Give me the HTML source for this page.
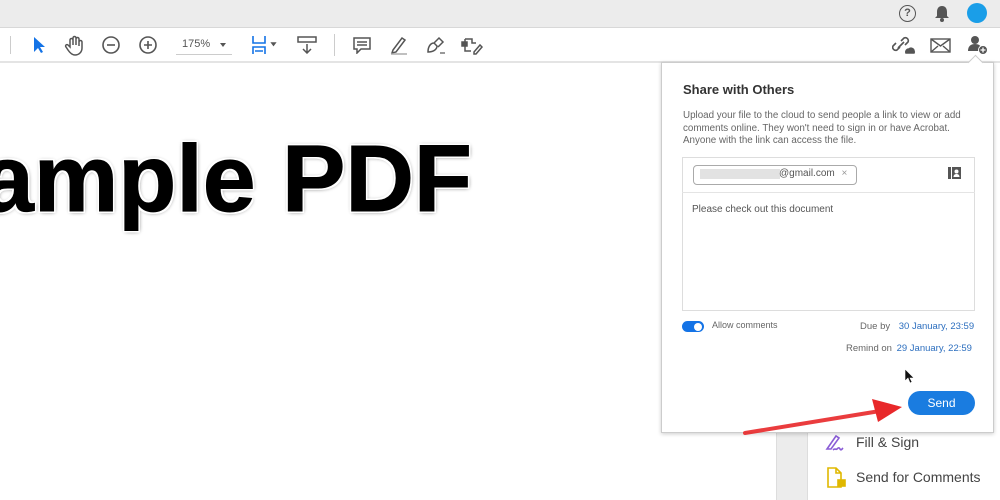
<!DOCTYPE html><html><head><style>
body{margin:0;width:1000px;height:500px;overflow:hidden;background:#fff;font-family:"Liberation Sans",sans-serif;position:relative}
.a{position:absolute}
</style></head><body>
<div class="a" style="left:0;top:0;width:1000px;height:27px;background:#ececec;border-bottom:1px solid #d8d8d8"></div>
<div class="a" style="left:0;top:28px;width:1000px;height:33px;background:#fff;border-bottom:2px solid #e4e4e4"></div>
<div class="a" style="left:899px;top:5px;width:15px;height:15px;border:1.5px solid #555;border-radius:50%;font-size:11px;font-weight:bold;color:#555;text-align:center;line-height:15px">?</div>
<svg class="a" style="left:934px;top:5px" width="16" height="17"><path d="M8 1c-3 0-5 2-5 6v4l-2 2h14l-2-2V7c0-4-2-6-5-6z" fill="#555"/><circle cx="8" cy="15" r="2" fill="#555"/></svg>
<div class="a" style="left:967px;top:3px;width:20px;height:20px;border-radius:50%;background:#1a9ee8"></div>
<div class="a" style="left:10px;top:36px;width:1px;height:18px;background:#ccc"></div>
<svg class="a" style="left:32px;top:36px" width="14" height="18"><path d="M2 1v15l4-4 3 5 2-1-3-5h5z" fill="#1473e6"/></svg>
<svg class="a" style="left:64px;top:34px" width="22" height="22" fill="none" stroke="#555" stroke-width="1.5"><path d="M6 13V6a1.5 1.5 0 013 0v5V4a1.5 1.5 0 013 0v7V5a1.5 1.5 0 013 0v7V8a1.5 1.5 0 013 0v6c0 4-3 7-7 7-3 0-5-2-7-5l-2-3a1.3 1.3 0 012-2z"/></svg>
<svg class="a" style="left:101px;top:35px" width="20" height="20" fill="none" stroke="#555" stroke-width="1.6"><circle cx="10" cy="10" r="8"/><path d="M6 10h8"/></svg>
<svg class="a" style="left:138px;top:35px" width="20" height="20" fill="none" stroke="#555" stroke-width="1.6"><circle cx="10" cy="10" r="8"/><path d="M6 10h8M10 6v8"/></svg>
<div class="a" style="left:182px;top:38px;font-size:11px;color:#555">175%</div>
<div class="a" style="left:220px;top:43px;border:3px solid transparent;border-top:4px solid #555"></div>
<div class="a" style="left:176px;top:54px;width:56px;height:1px;background:#ccc"></div>
<svg class="a" style="left:250px;top:34px" width="30" height="22" fill="none" stroke="#1473e6" stroke-width="1.6"><path d="M3 2v7h12V2M3 20v-7h12v7M5 17h8"/><path d="M22 9l3 0-1.5 2z" fill="#555" stroke="#555"/></svg>
<svg class="a" style="left:297px;top:36px" width="20" height="18" fill="none" stroke="#555" stroke-width="1.5"><rect x="1" y="1" width="18" height="5"/><path d="M10 8v9M6 13l4 4 4-4"/></svg>
<div class="a" style="left:334px;top:34px;width:1px;height:22px;background:#ccc"></div>
<svg class="a" style="left:352px;top:36px" width="20" height="18" fill="none" stroke="#555" stroke-width="1.5"><path d="M2 2h16v11H9l-4 4v-4H2z M5 6h10M5 9h10"/></svg>
<svg class="a" style="left:389px;top:35px" width="20" height="20" fill="none" stroke="#555" stroke-width="1.5"><path d="M4 15l9-12 3 2-9 12-4 1z"/><path d="M2 19h16" stroke="#aaa"/></svg>
<svg class="a" style="left:425px;top:35px" width="22" height="20" fill="none" stroke="#555" stroke-width="1.5"><path d="M3 17c0-6 3-9 6-9l3 3c0 3-3 6-9 6zM9 8l5-5 4 4-5 5"/><path d="M15 18h5" stroke="#777"/></svg>
<svg class="a" style="left:461px;top:35px" width="22" height="20" fill="none" stroke="#555" stroke-width="1.5"><path d="M4 4h7v4h4M4 4v12h6M13 17l6-7 2 2-6 7h-2z"/><rect x="1" y="7" width="5" height="4" fill="#555"/></svg>
<svg class="a" style="left:892px;top:35px" width="24" height="20" fill="none" stroke="#555" stroke-width="1.6"><path d="M9 6l3-3a3 3 0 014 4l-3 3M8 12l-3 3a3 3 0 01-4-4l3-3M6 13l6-6"/><path d="M14 18a3 3 0 013-4 3 3 0 015 2 2 2 0 010 2z" fill="#555"/></svg>
<svg class="a" style="left:930px;top:38px" width="21" height="15" fill="none" stroke="#555" stroke-width="1.4"><rect x="1" y="1" width="19" height="13"/><path d="M1 1l9.5 7 9.5-7M1 14l7-6M20 14l-7-6"/></svg>
<svg class="a" style="left:966px;top:34px" width="24" height="22"><circle cx="9" cy="6" r="4" fill="#555"/><path d="M2 17c0-5 3-7 7-7s7 2 7 7z" fill="#555"/><circle cx="17" cy="16" r="4.5" fill="#555" stroke="#fff"/><path d="M17 13.5v5M14.5 16h5" stroke="#fff" stroke-width="1.3"/></svg>
<div class="a" style="left:-19px;top:124px;font-size:95px;font-weight:bold;color:#000;white-space:pre;line-height:110px;-webkit-text-stroke:1px #000;text-shadow:2px 0 0 #fff,-2px 0 0 #fff,0 2px 0 #fff,0 -2px 0 #fff,2px 2px 0 #fff,-2px -2px 0 #fff,2px -2px 0 #fff,-2px 2px 0 #fff,0 0 4px #999,1px 1px 4px #888">ample PDF</div>
<div class="a" style="left:776px;top:430px;width:30px;height:70px;background:#ececec;border-left:1px solid #ddd;border-right:1px solid #ddd"></div>
<svg class="a" style="left:825px;top:433px" width="20" height="20" fill="none" stroke="#8a5cd6" stroke-width="1.6"><path d="M2 16l9-13 3 2-8 11zM8 17c2-2 3 0 4-1s2-2 3 0 2 0 3-1"/></svg>
<div class="a" style="left:856px;top:434px;font-size:14px;color:#444">Fill &amp; Sign</div>
<svg class="a" style="left:826px;top:467px" width="22" height="22" fill="none" stroke="#e0b800" stroke-width="1.6"><path d="M2 1h8l5 5v14H2zM10 1v5h5"/><rect x="12" y="13" width="7" height="6" fill="#e0b800"/></svg>
<div class="a" style="left:856px;top:469px;font-size:14px;color:#444">Send for Comments</div>
<div class="a" style="left:661px;top:62px;width:331px;height:369px;background:#fff;border:1px solid #ccc;box-shadow:0 1px 4px rgba(0,0,0,.2)"></div>
<div class="a" style="left:970px;top:57px;width:10px;height:10px;background:#fff;border-left:1px solid #ccc;border-top:1px solid #ccc;transform:rotate(45deg)"></div>
<div class="a" style="left:683px;top:82px;font-size:13px;font-weight:bold;color:#333">Share with Others</div>
<div class="a" style="left:683px;top:110px;width:295px;font-size:9.8px;line-height:12.5px;color:#666">Upload your file to the cloud to send people a link to view or add comments online. They won't need to sign in or have Acrobat. Anyone with the link can access the file.</div>
<div class="a" style="left:682px;top:157px;width:291px;height:152px;border:1px solid #ddd"></div>
<div class="a" style="left:682px;top:192px;width:293px;height:1px;background:#e4e4e4"></div>
<div class="a" style="left:693px;top:165px;width:162px;height:18px;border:1px solid #aaa;border-radius:4px"></div>
<div class="a" style="left:700px;top:169px;width:80px;height:10px;background:#e2e2e2"></div>
<div class="a" style="left:779px;top:168px;font-size:10px;color:#555">@gmail.com <span style="color:#999;margin-left:4px">×</span></div>
<svg class="a" style="left:948px;top:166px" width="14" height="14"><rect x="0" y="1" width="3" height="12" fill="#555"/><rect x="4" y="1" width="9" height="12" fill="#555"/><circle cx="8.5" cy="5.5" r="2" fill="#fff"/><path d="M5.5 11c0-2 1.3-3 3-3s3 1 3 3z" fill="#fff"/></svg>
<div class="a" style="left:692px;top:204px;font-size:10px;color:#555">Please check out this document</div>
<div class="a" style="left:682px;top:321px;width:22px;height:11px;border-radius:6px;background:#1473e6"></div>
<div class="a" style="left:694px;top:322.5px;width:8px;height:8px;border-radius:50%;background:#fff"></div>
<div class="a" style="left:712px;top:320px;font-size:9px;color:#666">Allow comments</div>
<div class="a" style="left:860px;top:321px;font-size:9.5px;color:#666">Due by <span style="color:#2d6fbf;margin-left:6px">30 January, 23:59</span></div>
<div class="a" style="left:846px;top:343px;font-size:9.5px;color:#666">Remind on <span style="color:#2d6fbf;margin-left:2px">29 January, 22:59</span></div>
<svg class="a" style="left:904px;top:368px" width="12" height="16"><path d="M1 1v12l3-3 2 5 2-1-2-4h4z" fill="#111" stroke="#fff" stroke-width=".6"/></svg>
<div class="a" style="left:908px;top:391px;width:67px;height:24px;border-radius:12px;background:#1a7ce0;color:#fff;font-size:12px;text-align:center;line-height:24px">Send</div>
<svg class="a" style="left:740px;top:395px" width="170" height="45"><path d="M5 38L140 16" stroke="#e8282a" stroke-width="4" stroke-linecap="round" opacity=".9"/><path d="M132 4l30 8-24 15z" fill="#e8282a"/></svg>
</body></html>
